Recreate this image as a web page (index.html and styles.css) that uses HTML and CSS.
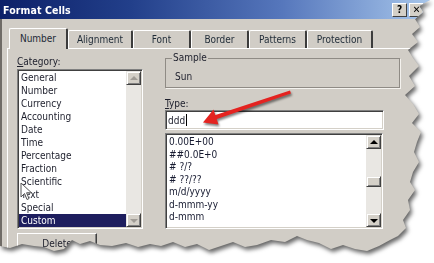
FILE: index.html
```html
<!DOCTYPE html>
<html>
<head>
<meta charset="utf-8">
<title>Format Cells</title>
<link rel="stylesheet" href="styles.css">
</head>
<body>
<div class="shadow-wrap">
  <div class="dialog">
    <div class="titlebar">
      <span class="title">Format Cells</span>
      <span class="tbtns"><span class="tb help">?</span><span class="tb close">✕</span></span>
    </div>
    <div class="frame">
      <div class="tabs">
        <div class="tab tab-number active">Number</div>
        <div class="tab tab-alignment">Alignment</div>
        <div class="tab tab-font">Font</div>
        <div class="tab tab-border">Border</div>
        <div class="tab tab-patterns">Patterns</div>
        <div class="tab tab-protection">Protection</div>
      </div>
      <div class="panel">
        <div class="col-left">
          <div class="label cat-label"><u>C</u>ategory:</div>
          <div class="listbox cat-list">
            <ul class="items">
              <li>General</li>
              <li>Number</li>
              <li>Currency</li>
              <li>Accounting</li>
              <li>Date</li>
              <li>Time</li>
              <li>Percentage</li>
              <li>Fraction</li>
              <li>Scientific</li>
              <li>Text</li>
              <li>Special</li>
              <li class="selected">Custom</li>
            </ul>
            <div class="vscroll disabled">
              <span class="sbtn up"><span class="tri tri-up"></span></span>
              <span class="track"></span>
              <span class="sbtn down"><span class="tri tri-down"></span></span>
            </div>
          </div>
          <div class="btnrow"><span class="btn">Delete</span></div>
        </div>
        <div class="col-right">
          <fieldset class="sample">
            <legend>Sample</legend>
            <div class="sample-value">Sun</div>
          </fieldset>
          <div class="label type-label"><u>T</u>ype:</div>
          <div class="input">ddd<span class="caret"></span></div>
          <div class="listbox type-list">
            <ul class="items">
              <li>0.00E+00</li>
              <li>##0.0E+0</li>
              <li># ?/?</li>
              <li># ??/??</li>
              <li>m/d/yyyy</li>
              <li>d-mmm-yy</li>
              <li>d-mmm</li>
            </ul>
            <div class="vscroll">
              <span class="sbtn up"><span class="tri tri-up"></span></span>
              <span class="track"><span class="thumb"></span></span>
              <span class="sbtn down"><span class="tri tri-down"></span></span>
            </div>
          </div>
        </div>
      </div>
    </div>
    <svg class="arrow" width="434" height="263" viewBox="0 0 434 263">
      <polygon points="290,90.5 291,93.5 214,120 212.5,116" fill="#e42320"/>
      <polygon points="203,122.5 218.5,124.5 213.5,109.5" fill="#e42320"/>
    </svg>
    <svg class="cursor" width="14" height="20" viewBox="0 0 14 20">
      <polygon points="1,1 1,15 4.5,11.5 7,17.5 9,16.6 6.6,10.8 11.5,10.8" fill="#fff" stroke="#555" stroke-width="1"/>
    </svg>
  </div>
</div>
</body>
</html>
```

FILE: styles.css
```css
* { box-sizing: border-box; }

body {
  margin: 0;
  background: #ffffff;
  font-family: "DejaVu Sans Condensed", "DejaVu Sans", "Liberation Sans", sans-serif;
  font-size: 10px;
  color: #1d1f2c;
}

.shadow-wrap {
  width: 434px;
  height: 263px;
  filter: drop-shadow(2px 3px 2px rgba(0, 0, 0, 0.6));
}

.dialog {
  position: relative;
  width: 434px;
  height: 263px;
  background: #d1cdc6;
  display: flex;
  flex-direction: column;
  overflow: hidden;
  clip-path: polygon(0 0, 430px 0, 419px 6px, 423px 12px, 415px 19px, 420px 27px, 412px 34px, 418px 42px, 408px 50px, 413px 58px, 419px 66px, 409px 76px, 415px 86px, 405px 95px, 413px 104px, 419px 114px, 412px 123px, 421px 132px, 417px 142px, 414px 152px, 419px 162px, 413px 172px, 410px 182px, 415px 190px, 408px 200px, 410px 210px, 403px 220px, 406px 228px, 398px 236px, 390px 240px, 379px 246px, 367px 251px, 355px 249px, 343px 245px, 331px 249px, 319px 243px, 307px 240px, 297px 236px, 285px 242px, 271px 240px, 257px 245px, 245px 247px, 233px 242px, 221px 246px, 209px 250px, 197px 244px, 185px 247px, 173px 242px, 161px 246px, 150px 244px, 138px 247px, 126px 243px, 112px 246px, 100px 245px, 90px 241px, 80px 244px, 72px 240px, 64px 249px, 54px 251px, 44px 247px, 34px 246px, 22px 244px, 10px 248px, 0 246px);
}

.titlebar {
  height: 19px;
  flex: none;
  display: flex;
  align-items: center;
  padding: 0 10px 0 3px;
  background: linear-gradient(90deg, #0c2068 0%, #223f8a 30%, #5677bc 65%, #a9c8ec 100%);
}

.title {
  color: #ffffff;
  font-weight: bold;
  font-size: 10.5px;
  letter-spacing: 0.1px;
}

.tbtns {
  margin-left: auto;
  display: flex;
  gap: 2px;
}

.tb {
  width: 15px;
  height: 14px;
  background: #d4d0c8;
  border: 1px solid;
  border-color: #ffffff #404040 #404040 #ffffff;
  font-weight: bold;
  font-size: 10px;
  line-height: 12px;
  text-align: center;
  color: #000;
}

.frame {
  flex: 1;
  border-left: 2px solid #6f6b66;
  padding: 9px 0 0 5px;
  display: flex;
  flex-direction: column;
}

.tabs {
  display: flex;
  align-items: flex-end;
  height: 20px;
  padding-left: 2px;
  flex: none;
}

.tab {
  height: 18px;
  border-top: 1px solid #ffffff;
  border-left: 1px solid #ffffff;
  border-right: 2px solid #3c3c3c;
  border-radius: 2px 2px 0 0;
  text-align: center;
  line-height: 17px;
  color: #1e2a36;
  white-space: nowrap;
}

.tab.active {
  height: 21px;
  margin-bottom: -1px;
  background: #d1cdc6;
  position: relative;
  z-index: 1;
  line-height: 19px;
}

.tab-number { width: 59px; }
.tab-alignment { width: 65px; }
.tab-font { width: 58px; }
.tab-border { width: 58px; }
.tab-patterns { width: 58px; }
.tab-protection { width: 66px; }

.panel {
  flex: 1;
  border-top: 1px solid #ffffff;
  border-left: 1px solid #ffffff;
  padding-left: 9px;
  display: flex;
  gap: 22px;
}

.col-left {
  width: 126px;
  flex: none;
  display: flex;
  flex-direction: column;
}

.col-right {
  width: 235px;
  flex: none;
  display: flex;
  flex-direction: column;
}

.label {
  height: 13px;
  line-height: 13px;
}

.label u { text-decoration: underline; }

.cat-label { margin-top: 6px; }

.listbox {
  background: #ffffff;
  border: 1px solid;
  border-color: #808080 #ffffff #ffffff #808080;
  box-shadow: inset 1px 1px 0 #404040, inset -1px -1px 0 #d4d0c8;
  display: flex;
  padding: 1px;
}

.items {
  list-style: none;
  margin: 0;
  padding: 0;
  flex: 1;
  overflow: hidden;
}

.items li {
  padding-left: 2px;
  white-space: nowrap;
}

.cat-list {
  margin-top: 1px;
  height: 160px;
}

.cat-list .items li {
  height: 13px;
  line-height: 13px;
}

.cat-list .items li.selected {
  background: #1e1e5e;
  color: #ffffff;
}

.vscroll {
  width: 15px;
  flex: none;
  display: flex;
  flex-direction: column;
  background: #e9e7e3;
}

.sbtn, .thumb {
  height: 14px;
  flex: none;
  background: #d4d0c8;
  border: 1px solid;
  border-color: #e8e6e2 #404040 #404040 #e8e6e2;
  box-shadow: inset 1px 1px 0 #ffffff, inset -1px -1px 0 #808080;
  display: flex;
  align-items: center;
  justify-content: center;
}

.track {
  flex: 1;
}

.tri {
  width: 0;
  height: 0;
  border-left: 4px solid transparent;
  border-right: 4px solid transparent;
}

.tri-up { border-bottom: 4px solid #000; margin-top: -1px; }
.tri-down { border-top: 4px solid #000; margin-top: 1px; }

.disabled .tri-up { border-bottom-color: #a09c96; }
.disabled .tri-down { border-top-color: #a09c96; }

.btnrow {
  margin-top: 4px;
}

.btn {
  display: block;
  width: 80px;
  height: 22px;
  border: 1px solid;
  border-color: #ffffff #404040 #404040 #ffffff;
  box-shadow: inset -1px -1px 0 #808080;
  text-align: center;
  line-height: 20px;
}

.sample {
  margin: 3px 0 0 0;
  padding: 0 0 4px 6px;
  border: 1px solid #8f8b85;
  box-shadow: 1px 1px 0 #f4f2ee;
  height: 36px;
}

.sample legend {
  padding: 0 1px;
  line-height: 12px;
  height: 12px;
}

.sample-value {
  margin-top: 6px;
  padding-left: 3px;
  line-height: 13px;
  height: 13px;
}

.type-label {
  margin-top: 9px;
}

.input {
  width: 219px;
  height: 20px;
  background: #ffffff;
  border: 1px solid;
  border-color: #808080 #ffffff #ffffff #808080;
  box-shadow: inset 1px 1px 0 #404040, inset -1px -1px 0 #d4d0c8;
  padding-left: 2px;
  line-height: 19px;
  display: flex;
  align-items: center;
}

.caret {
  display: inline-block;
  width: 1px;
  height: 12px;
  background: #000;
  margin-left: 1px;
}

.type-list {
  margin-top: 3px;
  width: 218px;
  height: 96px;
}

.type-list .items {
  padding-top: 1px;
}

.type-list .items li {
  height: 12.5px;
  line-height: 12.5px;
  color: #161a30;
}

.type-list .thumb {
  display: block;
  height: 11px;
  margin-top: 27px;
}

.arrow {
  position: absolute;
  left: 0;
  top: 0;
  pointer-events: none;
  filter: drop-shadow(1px 2px 1.2px rgba(0, 0, 0, 0.5));
}

.cursor {
  position: absolute;
  left: 20px;
  top: 182px;
  pointer-events: none;
}
```
